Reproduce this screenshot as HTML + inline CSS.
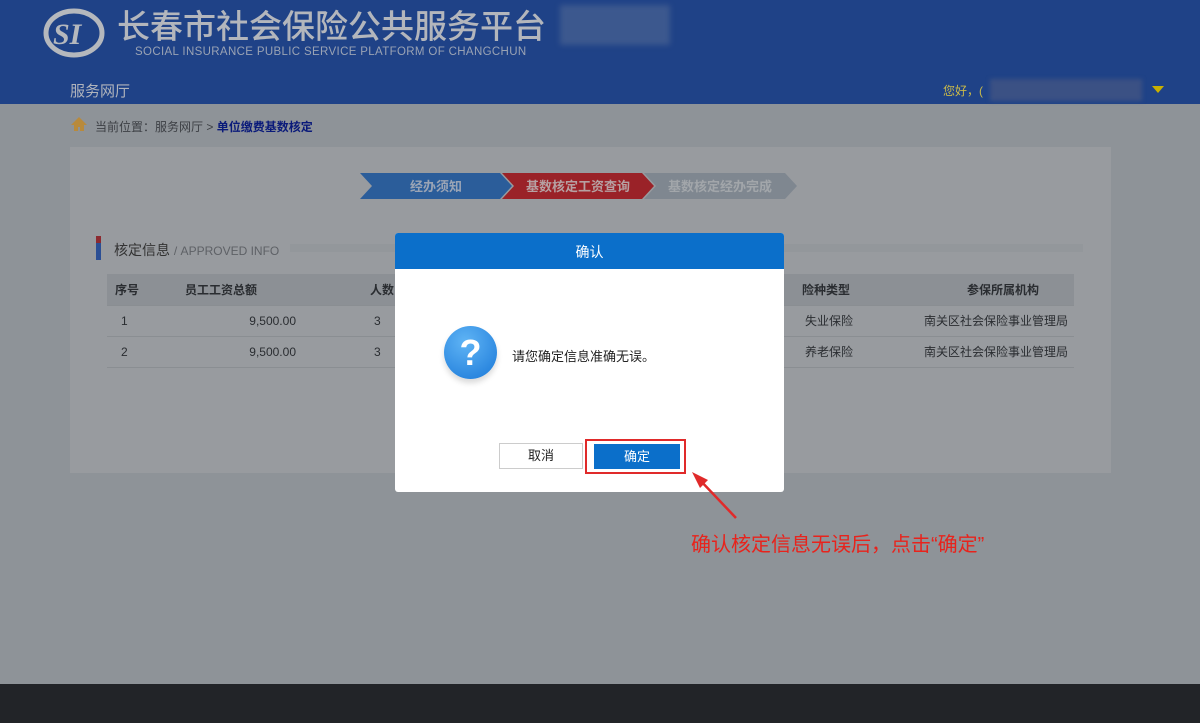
<!DOCTYPE html>
<html><head><meta charset="utf-8"><style>
*{margin:0;padding:0;box-sizing:border-box}
body{width:1200px;height:723px;overflow:hidden;background:#8e9398;font-family:"Liberation Sans","Noto Sans CJK SC",sans-serif;position:relative}
.abs{position:absolute}
.hdr{left:0;top:0;width:1200px;height:104px;background:#1f4287}
.panel{left:70px;top:147px;width:1041px;height:326px;background:#989b9f}
.footer{left:0;top:684px;width:1200px;height:39px;background:#222428}
.t{position:absolute;white-space:nowrap}
table{position:absolute;left:107px;top:274px;width:967px;border-collapse:collapse;font-size:12px;color:#2a2d31}
td,th{height:31px;border-bottom:1px solid #8a8e92}
th{background:#8c9095;font-weight:bold;text-align:left;padding-left:8px}
.dlg{left:395px;top:233px;width:389px;height:259px;background:#fff;border-radius:3px;overflow:hidden}
.dt{height:36px;background:#0b6fca;color:#fff;font-size:14px;text-align:center;line-height:38px}
</style></head><body>
<div class="abs hdr"></div>
<svg class="abs" style="left:43px;top:7px" width="62" height="52" viewBox="0 0 62 52"><ellipse cx="31" cy="26" rx="28" ry="22" fill="none" stroke="#b5b8bd" stroke-width="5"/><text x="10" y="37" font-family="Liberation Serif" font-style="italic" font-weight="bold" font-size="30" fill="#b5b8bd">SI</text></svg>
<div class="t" style="left:117px;top:2px;font-size:33px;color:#b3b6bc;letter-spacing:0;font-family:'Noto Sans CJK SC',sans-serif;font-weight:500;line-height:44px">长春市社会保险公共服务平台</div>
<div class="abs" style="left:560px;top:5px;width:110px;height:40px;background:#5a6f96;opacity:.5;filter:blur(3px)"></div>
<div class="t" style="left:135px;top:46px;font-size:11.5px;color:#9aa3b4;letter-spacing:0.35px">SOCIAL INSURANCE PUBLIC SERVICE PLATFORM OF CHANGCHUN</div>
<div class="t" style="left:70px;top:80px;font-size:15px;color:#b0b4bc">服务网厅</div>
<div class="t" style="left:943px;top:82px;font-size:12px;color:#c9b94a">您好，(</div>
<div class="abs" style="left:990px;top:79px;width:152px;height:22px;background:#3b5184;filter:blur(2px)"></div>
<div class="abs" style="left:1152px;top:86px;width:0;height:0;border-left:6px solid transparent;border-right:6px solid transparent;border-top:7px solid #c9b000"></div>
<svg class="abs" style="left:70px;top:116px" width="18" height="16"><path d="M9 1L1 9h3v6h4v-4h2v4h4V9h3z" fill="#b88a3c"/></svg>
<div class="t" style="left:95px;top:118px;font-size:12px;color:#3c3f44">当前位置：服务网厅 &gt; <span style="color:#0a1a7a;font-weight:bold">单位缴费基数核定</span></div>
<div class="abs panel"></div>
<svg class="abs" style="left:360px;top:173px" width="440" height="26">
<polygon points="0,0 140,0 152,13 140,26 0,26 12,13" fill="#2b5d9a"/>
<polygon points="142,0 282,0 294,13 282,26 142,26 154,13" fill="#9a2228"/>
<polygon points="284,0 425,0 437,13 425,26 284,26 296,13" fill="#7f8790"/>
<text x="76" y="18" font-size="13" font-weight="bold" fill="#9aa4b5" text-anchor="middle" font-family="Noto Sans CJK SC">经办须知</text>
<text x="218" y="18" font-size="13" font-weight="bold" fill="#b6a0a2" text-anchor="middle" font-family="Noto Sans CJK SC">基数核定工资查询</text>
<text x="360" y="18" font-size="13" font-weight="bold" fill="#a2a6aa" text-anchor="middle" font-family="Noto Sans CJK SC">基数核定经办完成</text>
</svg>
<div class="abs" style="left:96px;top:236px;width:5px;height:24px;background:linear-gradient(#8c2a30 30%,#2b4e94 30%)"></div>
<div class="t" style="left:114px;top:240px;font-size:14px;color:#333">核定信息 <span style="font-size:12px;color:#5e6166">/ APPROVED INFO</span></div>
<div class="abs" style="left:290px;top:244px;width:793px;height:8px;background:#93979b"></div>
<table>
<tr><th style="width:70px">序号</th><th style="width:185px">员工工资总额</th><th>人数</th><th></th><th style="width:130px">险种类型</th><th style="width:150px;text-align:center">参保所属机构</th></tr>
<tr><td style="padding-left:14px">1</td><td style="text-align:right;padding-right:66px">9,500.00</td><td style="padding-left:12px">3</td><td></td><td style="padding-left:11px">失业保险</td><td>南关区社会保险事业管理局</td></tr>
<tr><td style="padding-left:14px">2</td><td style="text-align:right;padding-right:66px">9,500.00</td><td style="padding-left:12px">3</td><td></td><td style="padding-left:11px">养老保险</td><td>南关区社会保险事业管理局</td></tr>
</table>
<div class="abs dlg"><div class="dt">确认</div></div>
<div class="abs" style="left:444px;top:326px;width:53px;height:53px;border-radius:50%;background:radial-gradient(circle at 40% 30%,#5fb4f5,#1a78d8);box-shadow:0 4px 6px rgba(0,0,0,.15);color:#fff;font-size:36px;font-weight:bold;text-align:center;line-height:53px">?</div>
<div class="t" style="left:512px;top:346px;font-size:13px;color:#222">请您确定信息准确无误。</div>
<div class="abs" style="left:499px;top:443px;width:84px;height:26px;border:1px solid #ccc;background:#fff;font-size:13px;text-align:center;line-height:24px;color:#222">取消</div>
<div class="abs" style="left:585px;top:439px;width:101px;height:35px;border:2px solid #e02a2a"></div>
<div class="abs" style="left:594px;top:444px;width:86px;height:25px;background:#0b6fca;color:#fff;font-size:13px;text-align:center;line-height:25px">确定</div>
<svg class="abs" style="left:690px;top:470px" width="50" height="50"><path d="M46 48L8 8" stroke="#e02a2a" stroke-width="2.5"/><polygon points="2,2 18,10 10,18" fill="#e02a2a"/></svg>
<div class="t" style="left:691px;top:528px;font-size:20px;color:#e8231c">确认核定信息无误后，点击“确定”</div>
<div class="abs footer"></div>
</body></html>
